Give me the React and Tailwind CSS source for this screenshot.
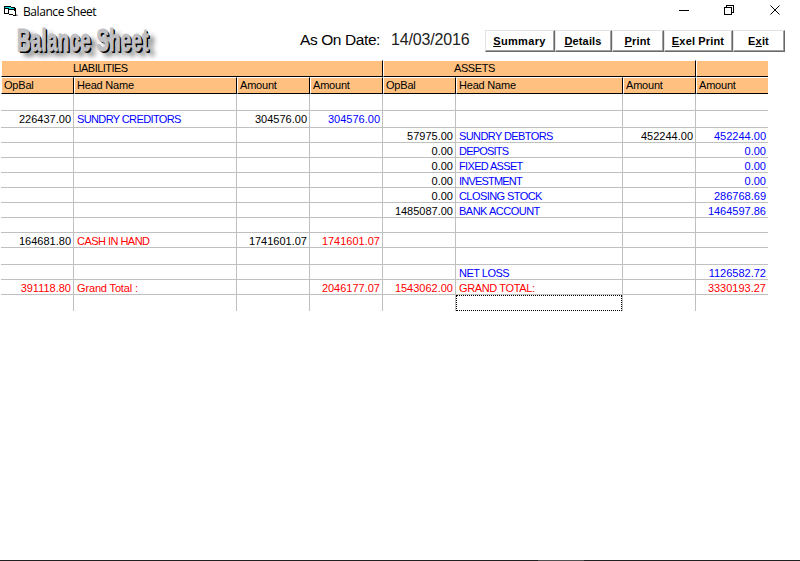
import React from "react";

const COLS = "grid grid-rows-1 grid-cols-[73px_163px_73px_73px_73px_167px_73px_72px]";

const HEADS = ["OpBal", "Head Name", "Amount", "Amount", "OpBal", "Head Name", "Amount", "Amount"];

const K = "text-black";
const B = "text-[#0000ff]";
const R = "text-[#ff0000]";

// Each row: height, then a map of column index to [text, colour, tracking].
const ROWS = [
  ["h-[17px]", {}],
  ["h-[17px]", { 0: ["226437.00", K], 1: ["SUNDRY CREDITORS", B, "tracking-[-0.62px]"], 2: ["304576.00", K], 3: ["304576.00", B] }],
  ["h-[15px]", { 4: ["57975.00", K], 5: ["SUNDRY DEBTORS", B, "tracking-[-0.59px]"], 6: ["452244.00", K], 7: ["452244.00", B] }],
  ["h-[15px]", { 4: ["0.00", K], 5: ["DEPOSITS", B, "tracking-[-0.8px]"], 7: ["0.00", B] }],
  ["h-[15px]", { 4: ["0.00", K], 5: ["FIXED ASSET", B, "tracking-[-0.66px]"], 7: ["0.00", B] }],
  ["h-[15px]", { 4: ["0.00", K], 5: ["INVESTMENT", B, "tracking-[-0.8px]"], 7: ["0.00", B] }],
  ["h-[15px]", { 4: ["0.00", K], 5: ["CLOSING STOCK", B, "tracking-[-0.57px]"], 7: ["286768.69", B] }],
  ["h-[15px]", { 4: ["1485087.00", K], 5: ["BANK ACCOUNT", B, "tracking-[-0.5px]"], 7: ["1464597.86", B] }],
  ["h-[15px]", {}],
  ["h-[15px]", { 0: ["164681.80", K], 1: ["CASH IN HAND", R, "tracking-[-0.53px]"], 2: ["1741601.07", K], 3: ["1741601.07", R] }],
  ["h-[17px]", {}],
  ["h-[15px]", { 5: ["NET LOSS", B, "tracking-[-0.52px]"], 7: ["1126582.72", B] }],
  ["h-[15px]", { 0: ["391118.80", R], 1: ["Grand Total :", R, "tracking-[-0.15px]"], 3: ["2046177.07", R], 4: ["1543062.00", R], 5: ["GRAND TOTAL:", R, "tracking-[-0.37px]"], 7: ["3330193.27", R] }],
];

function FormIcon() {
  return (
    <svg className="ml-[4px] mt-[5px] h-[13px] w-[14px]" viewBox="0 0 14 13" shapeRendering="crispEdges">
      <path d="M0 1h7v1h4v1h1v8H9v-1H5V9H0z" fill="#000" />
      <path d="M1 4h3v4H1zM5 5h5v1h1v4H9V9H5z" fill="#fff" />
      <path d="M1 2h6v1h3v1H5V3H1z" fill="#00e0e0" />
      <path d="M12 9h1v1h1v1h-2z" fill="#909090" />
    </svg>
  );
}

function Logo() {
  return (
    <div className="h-[36px] w-[160px] pl-[17px] pt-px">
      <span className="inline-block origin-left scale-x-[0.6] whitespace-nowrap text-[31px] font-bold leading-[32px] tracking-[0.6px] text-[#c0c0c4] [-webkit-text-stroke:1.2px_#c0c0c4] [text-shadow:2px_1px_0_#000,3px_2px_0_#000,10px_5px_7px_rgba(0,0,0,0.6)]">
        Balance Sheet
      </span>
    </div>
  );
}

function Button({ width, before = "", hot, after, tracking = "tracking-[0.15px]" }) {
  return (
    <button className={`${width} ${tracking} h-[22px] border border-t-[#e3e3e3] border-l-[#e3e3e3] border-r-[#696969] border-b-[#696969] bg-white pr-px text-[11px] font-bold leading-[20px] text-black shadow-[inset_-1px_-1px_0_#a0a0a0]`}>
      {before}<span className="underline underline-offset-1">{hot}</span>{after}
    </button>
  );
}

export default function App() {
  return (
    <div className="flex h-[561px] w-[800px] flex-col overflow-hidden bg-white font-['Liberation_Sans',Arial,sans-serif] text-[11px] text-black">
      <div className="flex h-[24px] shrink-0">
        <FormIcon />
        <span className="ml-[5px] mt-[3px] font-['Open_Sans','Noto_Sans',sans-serif] text-[12px] leading-[17px] tracking-[-0.43px]">Balance Sheet</span>
        <svg className="ml-auto h-[24px] w-[122px]" viewBox="0 0 122 24" fill="none" stroke="#000">
          <path d="M1 10.5h10" shapeRendering="crispEdges" />
          <path d="M46.5 7.5h7v7h-7zM48.5 7v-1.500h7v7h-2" shapeRendering="crispEdges" />
          <path d="M92.500 5.500l9 9M101.500 5.500l-9 9" />
        </svg>
      </div>

      <div className="flex h-[36px] shrink-0">
        <Logo />
        <span className="ml-[140px] mt-[6px] w-[91px] whitespace-nowrap text-[15.5px] leading-[20px] tracking-[-0.4px]">As On Date:</span>
        <span className="mt-[6px] w-[94px] whitespace-nowrap text-[16px] leading-[20px] tracking-[-0.15px] text-[#222]">14/03/2016</span>
        <div className="mt-[6px] flex">
          <Button width="w-[70px]" hot="S" after="ummary" tracking="tracking-[0.35px]" />
          <Button width="w-[57px]" hot="D" after="etails" />
          <Button width="w-[52px]" hot="P" after="rint" />
          <Button width="w-[69px]" hot="E" after="xel Print" />
          <Button width="w-[52px]" before="E" hot="x" after="it" />
        </div>
      </div>

      <div className="ml-px w-[767px]">
        <div className="grid h-[17px] grid-cols-[382px_313px_72px] leading-[15px]">
          <div className="border border-t-white border-l-white border-r-black border-b-black bg-[#ffc080] pl-[71px] tracking-[-0.55px]">LIABILITIES</div>
          <div className="border border-t-white border-l-white border-r-black border-b-black bg-[#ffc080] pl-[70px] tracking-[-0.4px]">ASSETS</div>
          <div className="border border-r-0 border-t-white border-l-white border-b-black bg-[#ffc080]" />
        </div>
        <div className={`${COLS} h-[17px] leading-[15px]`}>
          {HEADS.map((h, i) => (
            <div key={i} className={`border border-t-white border-l-white border-b-black bg-[#ffc080] pl-[2px] tracking-[-0.2px] ${i === 7 ? "border-r-0" : "border-r-black"}`}>{h}</div>
          ))}
        </div>
        {ROWS.map(([height, cells], r) => (
          <div key={r} className={`${COLS} ${height}`}>
            {HEADS.map((h, i) => {
              const cell = cells[i];
              const isName = i === 1 || i === 5;
              return (
                <div key={i} className={`flex items-start whitespace-nowrap border-b border-[#c0c0c0] pr-[2px] pt-[2px] leading-[13px] ${i === 7 ? "" : "border-r"} ${isName ? "pl-[3px]" : "justify-end"}`}>
                  {cell && <span className={`${cell[1]} ${cell[2] || ""}`}>{cell[0]}</span>}
                </div>
              );
            })}
          </div>
        ))}
        <div className={`${COLS} h-[16px]`}>
          {HEADS.map((h, i) => (
            <div key={i} className={`border-[#c0c0c0] ${i === 7 ? "" : "border-r"}`}>
              {i === 5 && <div className="h-[16px] w-[166px] border border-dotted border-black" />}
            </div>
          ))}
        </div>
      </div>

      <div className="mt-auto flex h-px bg-[#202020]">
        <div className="ml-[538px] w-[46px] bg-[#505050]" />
      </div>
    </div>
  );
}
